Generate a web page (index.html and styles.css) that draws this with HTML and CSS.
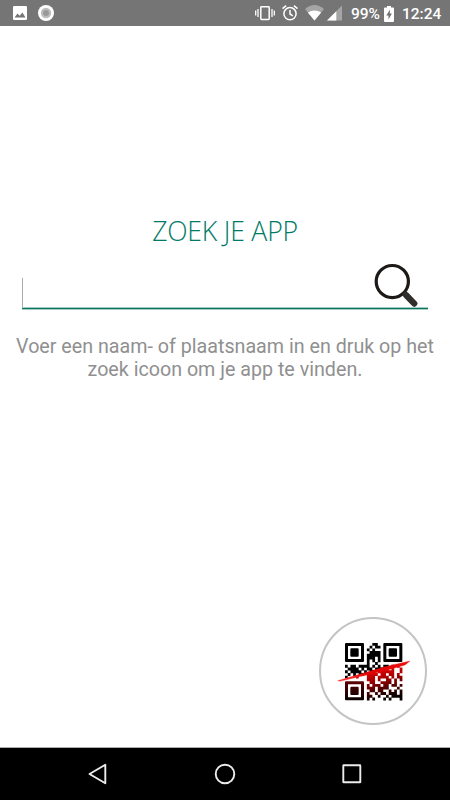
FILE: index.html
```
<!DOCTYPE html>
<html lang="nl">
<head>
<meta charset="utf-8">
<title>Zoek je app</title>
<link rel="stylesheet" href="styles.css">
</head>
<body>
<div class="screen">
  <header class="status">
    <svg class="status-left" width="60" height="26" viewBox="0 0 60 26">
      <rect x="13" y="6" width="14" height="14" rx="1.3" fill="#fff"/>
      <path d="M14.5 17.5l3-4 2.2 2.3 2.7-3.3 3.1 5z" fill="#757575"/>
      <circle cx="46" cy="13" r="8" fill="#fff"/>
      <circle cx="46" cy="13" r="5.2" fill="#bdbdbd"/>
      <circle cx="46" cy="13" r="3" fill="#999"/>
    </svg>
    <div class="status-right">
      <svg width="90" height="26" viewBox="0 0 90 26">
        <g fill="none" stroke="#fff" stroke-width="1.5">
          <rect x="8.8" y="6.8" width="8.4" height="12.6" rx=".7"/>
          <path d="M3.7 10.5v5M6 9v8M20 9v8M22.3 10.5v5" stroke-width="1.3"/>
          <circle cx="38" cy="13.7" r="6.1"/>
          <path d="M38 10v4l2.8 1.8M30.5 8.6l3.6-3M45.500 8.600l-3.600-3"/>
        </g>
        <path d="M53 9Q62.500 1 72 9L62.500 20.500z" fill="#a5a5a5"/>
        <path d="M55.800 12.500Q62.500 8.500 69.200 12.500L62.500 20.500z" fill="#fff"/>
        <path d="M75 20.500L90 5.500v15z" fill="#a5a5a5"/>
        <path d="M75 20.500l9.300-9.300v9.300z" fill="#fff"/>
      </svg>
      <span class="battery-text">99%</span>
      <svg class="battery" width="10" height="16" viewBox="0 0 10 16">
        <path d="M3 0h4v1.600h2q1 0 1 1V15q0 1-1 1H1q-1 0-1-1V2.600q0-1 1-1h2z" fill="#fff"/>
        <path d="M6 3.500L2.300 9.400h2.200v4.200l3.400-6H5.700z" fill="#707070"/>
      </svg>
      <span class="clock">12:24</span>
    </div>
  </header>
  <main>
    <h1>ZOEK JE APP</h1>
    <div class="search">
      <span class="caret"></span>
      <svg width="46" height="45" viewBox="0 0 46 45">
        <circle cx="20.300" cy="19.600" r="16.100" fill="none" stroke="#1c1917" stroke-width="3.200"/>
        <path d="M31 30.500L33 32.500" stroke="#292522" stroke-width="4"/>
        <path d="M34 33l8.300 8.600" stroke="#302d2a" stroke-width="6.200" stroke-linecap="round"/>
      </svg>
    </div>
    <p>Voer een naam- of plaatsnaam in en druk op het<br>zoek icoon om je app te vinden.</p>
    <button class="scan" aria-label="Scan QR-code">
      <svg width="76" height="64" viewBox="0 0 228 192">
        <defs>
          <linearGradient id="red" gradientUnits="userSpaceOnUse" x1="150" y1="82" x2="172" y2="174">
            <stop offset="0" stop-color="#e80606"/><stop offset=".35" stop-color="#a80000"/><stop offset=".7" stop-color="#480000"/><stop offset="1" stop-color="#080000"/>
          </linearGradient>
          <linearGradient id="dark-red" x1="0" y1="0" x2="0" y2="1">
            <stop offset="0" stop-color="#600000"/><stop offset=".55" stop-color="#2c0000"/><stop offset="1" stop-color="#080000"/>
          </linearGradient>
          <linearGradient id="beam"><stop offset="0" stop-color="#ff3030"/><stop offset=".5" stop-color="#e00000"/><stop offset="1" stop-color="#f01010"/></linearGradient>
          <clipPath id="above"><path d="M0 0H228V68L0 127z"/></clipPath>
          <clipPath id="below"><path d="M0 127L228 68V192H0z"/></clipPath>
          <path id="finder" fill-rule="evenodd" d="M3 0H54Q57 0 57 3V54Q57 57 54 57H3Q0 57 0 54V3Q0 0 3 0zM9 9V48H48V9zM19 16H38Q41 16 41 19V38Q41 41 38 41H19Q16 41 16 38V19Q16 16 19 16z"/>
          <path id="modules" fill="none" stroke-width="1.060" stroke-linejoin="round" transform="translate(30 12) scale(8.2)" d="M10 .5h2M9 1.500h1M11 1.500h2M8 2.500h1M10 2.500h1M9 3.500h4M8 4.500h2M10 4.500h3M8 5.500h3M12 5.500h1M8 6.500h1M10 6.500h1M12 6.500h1M8 7.500h1M11 7.500h1
M0 8.500h1M2 8.500h2M5 8.500h4M10 8.500h1M12 8.500h1M14 8.500h2M17 8.500h1M19 8.500h1M1 9.500h1M2 9.500h3M6 9.500h1M8 9.500h2M11 9.500h5M17 9.500h1M20 9.500h1M0 10.500h1M2 10.500h4M7 10.500h1M9 10.500h2M12 10.500h6M20 10.500h1M1 11.500h1M3 11.500h1M5 11.500h2M8 11.500h4M13 11.500h2M16 11.500h2M19 11.500h1M0 12.500h1M4 12.500h1M8 12.500h3M12 12.500h4M17 12.500h1M19 12.500h2
M8 13.500h3M12 13.500h1M15 13.500h2M18 13.500h1M20 13.500h1M9 14.500h2M13 14.500h4M18 14.500h1M8 15.500h1M10 15.500h3M14 15.500h2M17 15.500h2M20 15.500h1M8 16.500h3M12 16.500h4M19 16.500h1M9 17.500h2M12 17.500h2M16 17.500h1M18 17.500h1M20 17.500h1M8 18.500h1M11 18.500h1M13 18.500h2M16 18.500h3M20 18.500h1M8 19.500h2M12 19.500h1M15 19.500h1M17 19.500h4M8 20.500h1M10 20.500h1M14 20.500h1M16 20.500h1M20 20.500h1"/>
        </defs>
        <use href="#finder" x="30" y="12"/>
        <use href="#finder" x="145" y="12"/>
        <use href="#finder" x="30" y="127" fill="url(#dark-red)"/>
        <use href="#modules" clip-path="url(#above)" stroke="#000"/>
        <g clip-path="url(#below)">
          <mask id="module-mask" maskUnits="userSpaceOnUse" x="0" y="0" width="228" height="192"><use href="#modules" stroke="#fff"/></mask>
          <rect x="25" y="60" width="185" height="130" fill="url(#red)" mask="url(#module-mask)"/>
        </g>
        <path d="M8 125L150 83L225 66L210 78L150 95L14 127z" fill="url(#beam)" stroke="url(#beam)" stroke-width="1"/>
      </svg>
    </button>
  </main>
  <nav>
    <svg width="20" height="22" viewBox="0 0 20 22"><path d="M1.500 11L17.300 1.800v18.400z"/></svg>
    <svg width="22" height="22" viewBox="0 0 22 22"><circle cx="11" cy="11" r="9.300"/></svg>
    <svg width="20" height="20" viewBox="0 0 20 20"><rect x="1.300" y="1.300" width="17" height="17" rx=".4"/></svg>
  </nav>
</div>
</body>
</html>
```
FILE: styles.css
```
body {
  margin: 0;
  background: #fff;
  font-family: Roboto, sans-serif;
}
svg {
  display: block;
  flex: none;
}
.screen {
  width: 450px;
  height: 800px;
  display: flex;
  flex-direction: column;
  overflow: hidden;
}
.status {
  height: 26px;
  flex: none;
  background: #757575;
  color: #fff;
  display: flex;
  justify-content: space-between;
  box-sizing: border-box;
}
.status-right {
  width: 198px;
  display: flex;
  align-items: center;
  line-height: 26px;
}
.battery-text {
  width: 33px;
  padding-left: 9px;
  padding-top: 2px;
}
.battery-text,
.clock {
  font-size: 15.500px;
  font-weight: 500;
  white-space: nowrap;
}
.battery {
  margin-top: 1px;
}
.clock {
  padding-left: 8px;
  padding-top: 2px;
}
main {
  flex: 1;
  display: flex;
  flex-direction: column;
  border-bottom: 1px solid #aaa;
}
h1 {
  margin: 186px 0 0;
  height: 38px;
  text-align: center;
  font: 300 26.600px/38px "Open Sans", sans-serif;
  letter-spacing: -0.200px;
  color: #007a66;
}
.search {
  margin: 12px 22px 0;
  height: 48px;
  background: linear-gradient(#a5cdc4 1px, #08735e 1px 2px, #a5cdc4 2px) bottom / 100% 3px no-repeat;
  display: flex;
  justify-content: space-between;
}
.caret {
  width: 1px;
  height: 29px;
  margin-top: 16px;
  background: #aaa;
}
.search svg {
  margin-right: 10px;
}
p {
  margin: 25px 0 0;
  text-align: center;
  font-size: 19.680px;
  line-height: 23px;
  color: #909090;
  white-space: nowrap;
}
.scan {
  width: 108px;
  height: 108px;
  box-sizing: border-box;
  margin: auto 23px 22px auto;
  padding: 0;
  border: 2px solid #c4c4c4;
  border-radius: 50%;
  background: #fff;
  display: flex;
  align-items: center;
  justify-content: center;
}
nav {
  height: 52px;
  flex: none;
  background: #000;
  display: flex;
  align-items: center;
  justify-content: space-between;
  padding: 0 88px;
}
nav svg {
  fill: none;
  stroke: #ececec;
  stroke-width: 1.900;
  stroke-linejoin: round;
}
```
